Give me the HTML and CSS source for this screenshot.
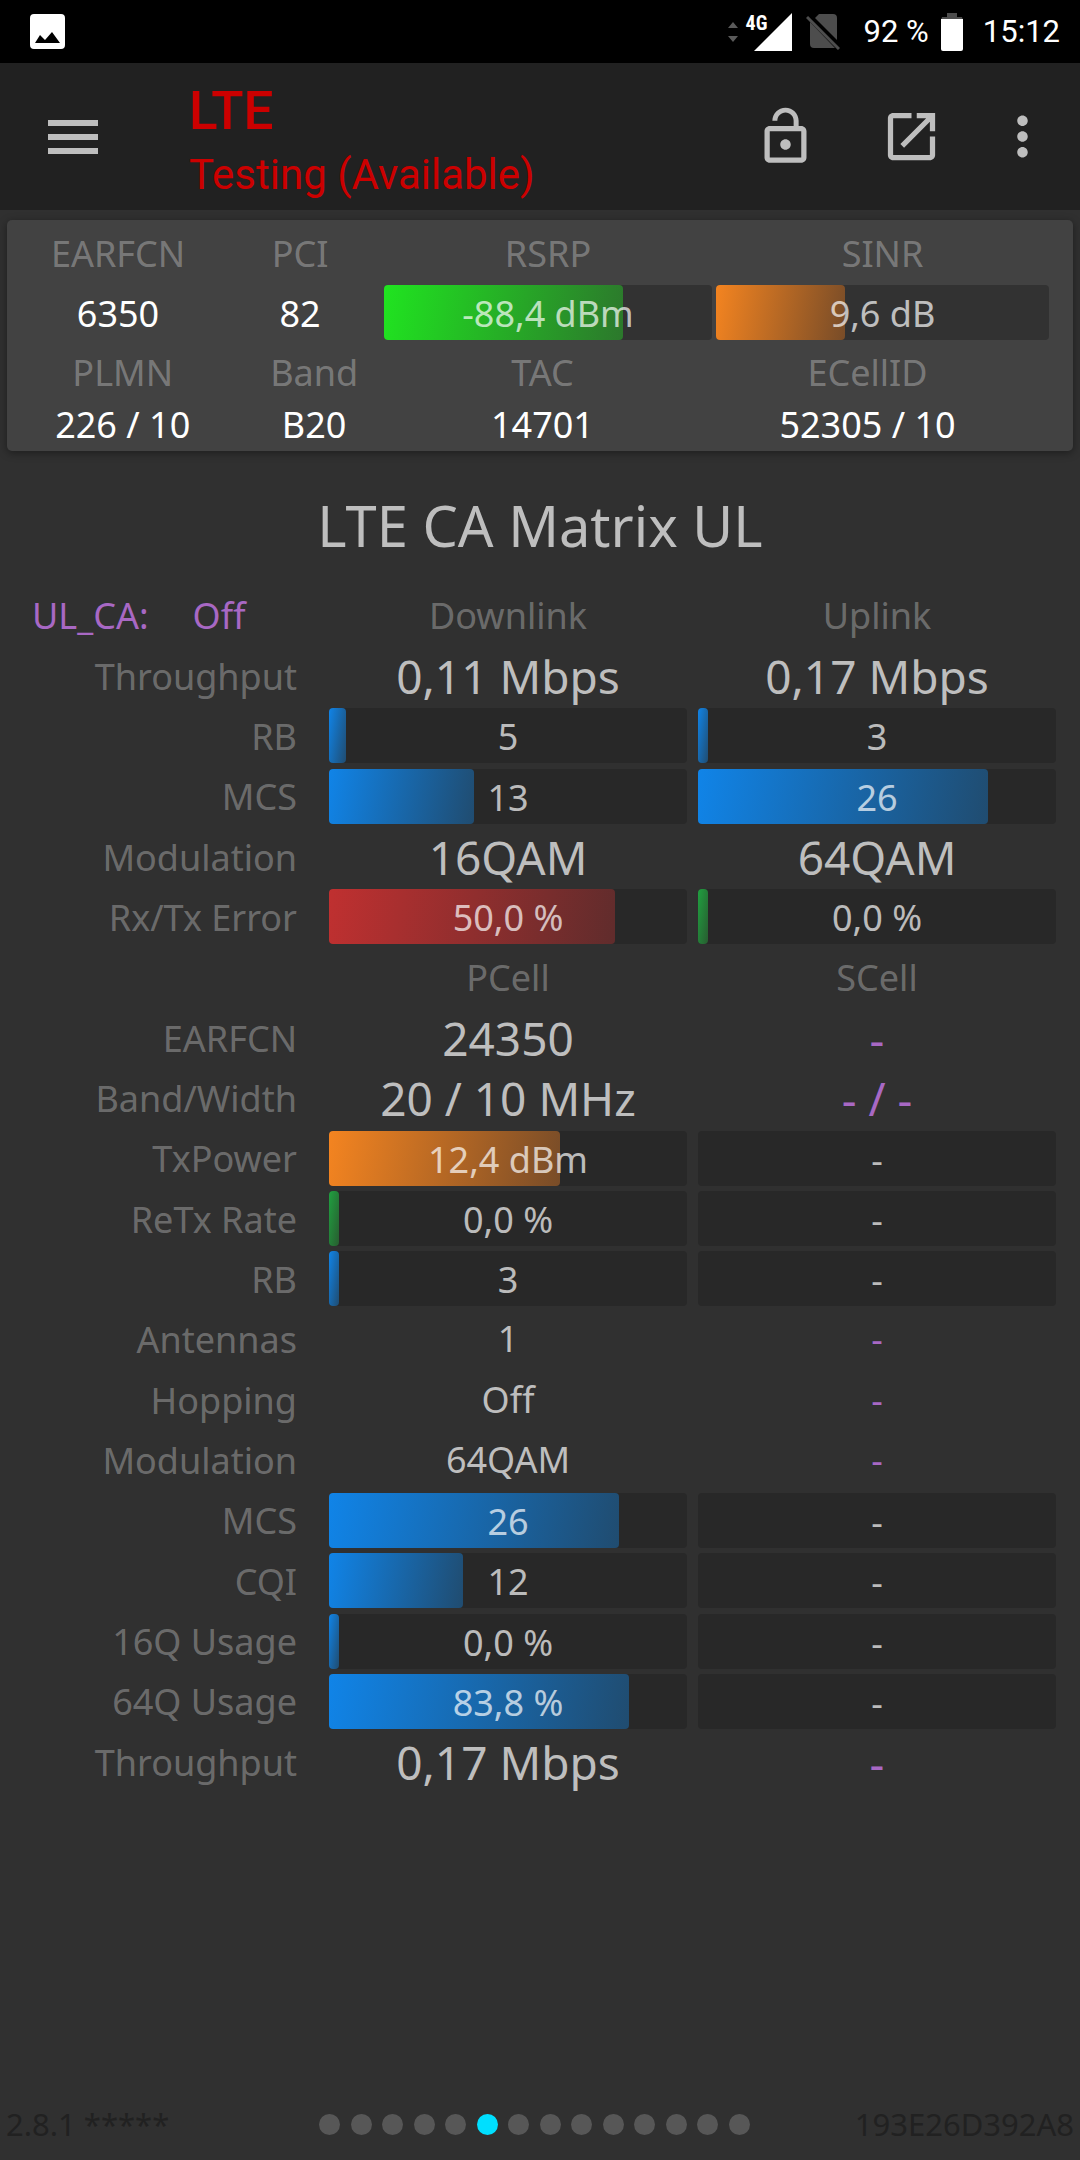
FILE: index.html
```html
<!DOCTYPE html>
<html lang="en">
<head>
<meta charset="utf-8">
<meta name="viewport" content="width=device-width">
<title>LTE CA Matrix UL</title>
<link rel="stylesheet" href="styles.css">
</head>
<body>
<div class="statusbar">
  <svg class="notice" viewBox="0 0 35 35" width="35" height="35"><path fill="#fff" fill-rule="evenodd" d="M4 0h27a4 4 0 0 1 4 4v27a4 4 0 0 1-4 4H4a4 4 0 0 1-4-4V4a4 4 0 0 1 4-4zM5 29h25L22 18l-7 8-5-5z"/></svg>
  <div class="network">
    <svg viewBox="0 0 10 20" width="10" height="20" fill="#5a5a5a"><path d="M5 0l5 6H0zM5 20l5-6H0z"/></svg>
    <div class="signal">
      <svg viewBox="0 0 38 38" width="38" height="38" fill="#fff"><path d="M38 0v38H0z"/></svg>
      <span class="signal-type">4G</span>
    </div>
    <svg class="sim" viewBox="0 0 34 37" width="34" height="37"><path fill="#4d4d4d" d="M13 1h14a4 4 0 0 1 4 4v22L9 5zM4 9l25 26H8a4 4 0 0 1-4-4z"/><path stroke="#4d4d4d" stroke-width="3" d="M1 4l32 32"/></svg>
  </div>
  <span class="charge">92 %</span>
  <svg class="battery" viewBox="0 0 22 38" width="22" height="38"><path fill="#4d4d4d" d="M6 0h10v4h5l1 3H0l1-3h5z"/><path fill="#fff" d="M0 6h22v30a2 2 0 0 1-2 2H2a2 2 0 0 1-2-2z"/></svg>
  <time>15:12</time>
</div>

<header class="toolbar">
  <button class="icon-button menu" aria-label="Menu"><svg viewBox="0 0 50 34" width="50" height="34"><path d="M0 0h50v6H0zM0 14h50v6H0zM0 28h50v6H0z"/></svg></button>
  <div class="heading">
    <div class="network-type">LTE</div>
    <div class="operator">Testing (Available)</div>
  </div>
  <button class="icon-button" aria-label="Unlock"><svg viewBox="0 0 24 24" width="63" height="63"><path d="M12 17c1.1 0 2-.9 2-2s-.9-2-2-2-2 .9-2 2 .9 2 2 2zm6-9h-1V6c0-2.76-2.24-5-5-5S7 3.24 7 6h1.9c0-1.71 1.39-3.1 3.1-3.1 1.71 0 3.1 1.39 3.1 3.1v2H6c-1.1 0-2 .9-2 2v10c0 1.1.9 2 2 2h12c1.1 0 2-.9 2-2V10c0-1.1-.9-2-2-2zm0 12H6V10h12v10z"/></svg></button>
  <button class="icon-button open" aria-label="Open"><svg viewBox="0 0 24 24" width="63" height="63"><path d="M19 19H5V5h7V3H5c-1.11 0-2 .9-2 2v14c0 1.1.89 2 2 2h14c1.1 0 2-.9 2-2v-7h-2v7zM14 3v2h3.59l-9.83 9.83 1.41 1.41L19 6.41V10h2V3h-7z"/></svg></button>
  <button class="icon-button more" aria-label="More"><svg viewBox="0 0 24 24" width="63" height="63"><path d="M12 8c1.1 0 2-.9 2-2s-.9-2-2-2-2 .9-2 2 .9 2 2 2zm0 2c-1.1 0-2 .9-2 2s.9 2 2 2 2-.9 2-2-.9-2-2-2zm0 6c-1.1 0-2 .9-2 2s.9 2 2 2 2-.9 2-2-.9-2-2-2z"/></svg></button>
</header>

<section class="card">
  <dl class="facts radio">
    <div><dt>EARFCN</dt><dd>6350</dd></div>
    <div><dt>PCI</dt><dd>82</dd></div>
    <div><dt>RSRP</dt><dd class="bar"><span class="fill lime" style="width:73%"></span><span class="value">-88,4 dBm</span></dd></div>
    <div><dt>SINR</dt><dd class="bar"><span class="fill orange" style="width:38.7%"></span><span class="value">9,6 dB</span></dd></div>
  </dl>
  <dl class="facts cell">
    <div><dt>PLMN</dt><dd>226 / 10</dd></div>
    <div><dt>Band</dt><dd>B20</dd></div>
    <div><dt>TAC</dt><dd>14701</dd></div>
    <div><dt>ECellID</dt><dd>52305 / 10</dd></div>
  </dl>
</section>

<main>
  <h1>LTE CA Matrix UL</h1>
  <table class="matrix">
    <colgroup><col class="names"><col><col></colgroup>
    <tbody>
    <tr><td class="aggregation"><span>UL_CA:</span><span>Off</span></td><th scope="col">Downlink</th><th scope="col">Uplink</th></tr>
    <tr class="large"><th scope="row">Throughput</th><td>0,11 Mbps</td><td>0,17 Mbps</td></tr>
    <tr><th scope="row">RB</th><td><div class="bar"><span class="fill blue" style="width:4.7%"></span><span class="value">5</span></div></td><td><div class="bar"><span class="fill blue" style="width:2.8%"></span><span class="value">3</span></div></td></tr>
    <tr><th scope="row">MCS</th><td><div class="bar"><span class="fill blue" style="width:40.5%"></span><span class="value">13</span></div></td><td><div class="bar"><span class="fill blue" style="width:81%"></span><span class="value">26</span></div></td></tr>
    <tr class="large"><th scope="row">Modulation</th><td>16QAM</td><td>64QAM</td></tr>
    <tr><th scope="row">Rx/Tx Error</th><td><div class="bar"><span class="fill red" style="width:80%"></span><span class="value">50,0 %</span></div></td><td><div class="bar"><span class="fill green" style="width:0%"></span><span class="value">0,0 %</span></div></td></tr>
    </tbody>
    <tbody>
    <tr><td></td><th scope="col">PCell</th><th scope="col">SCell</th></tr>
    <tr class="large"><th scope="row">EARFCN</th><td>24350</td><td class="none">-</td></tr>
    <tr class="large"><th scope="row">Band/Width</th><td>20 / 10 MHz</td><td class="none">- / -</td></tr>
    <tr><th scope="row">TxPower</th><td><div class="bar"><span class="fill orange" style="width:64.5%"></span><span class="value">12,4 dBm</span></div></td><td><div class="bar"><span class="value">-</span></div></td></tr>
    <tr><th scope="row">ReTx Rate</th><td><div class="bar"><span class="fill green" style="width:0%"></span><span class="value">0,0 %</span></div></td><td><div class="bar"><span class="value">-</span></div></td></tr>
    <tr><th scope="row">RB</th><td><div class="bar"><span class="fill blue" style="width:2.8%"></span><span class="value">3</span></div></td><td><div class="bar"><span class="value">-</span></div></td></tr>
    <tr><th scope="row">Antennas</th><td>1</td><td class="none">-</td></tr>
    <tr><th scope="row">Hopping</th><td>Off</td><td class="none">-</td></tr>
    <tr><th scope="row">Modulation</th><td>64QAM</td><td class="none">-</td></tr>
    <tr><th scope="row">MCS</th><td><div class="bar"><span class="fill blue" style="width:81%"></span><span class="value">26</span></div></td><td><div class="bar"><span class="value">-</span></div></td></tr>
    <tr><th scope="row">CQI</th><td><div class="bar"><span class="fill blue" style="width:37.5%"></span><span class="value">12</span></div></td><td><div class="bar"><span class="value">-</span></div></td></tr>
    <tr><th scope="row">16Q Usage</th><td><div class="bar"><span class="fill blue" style="width:0%"></span><span class="value">0,0 %</span></div></td><td><div class="bar"><span class="value">-</span></div></td></tr>
    <tr><th scope="row">64Q Usage</th><td><div class="bar"><span class="fill blue" style="width:83.8%"></span><span class="value">83,8 %</span></div></td><td><div class="bar"><span class="value">-</span></div></td></tr>
    <tr class="large"><th scope="row">Throughput</th><td>0,17 Mbps</td><td class="none">-</td></tr>
    </tbody>
  </table>
</main>

<footer>
  <span>2.8.1 *****</span>
  <nav class="pages" aria-label="Pages">
    <button aria-label="Page 1"></button><button aria-label="Page 2"></button><button aria-label="Page 3"></button><button aria-label="Page 4"></button><button aria-label="Page 5"></button><button aria-label="Page 6" aria-current="page"></button><button aria-label="Page 7"></button><button aria-label="Page 8"></button><button aria-label="Page 9"></button><button aria-label="Page 10"></button><button aria-label="Page 11"></button><button aria-label="Page 12"></button><button aria-label="Page 13"></button><button aria-label="Page 14"></button>
  </nav>
  <span class="device">193E26D392A8</span>
</footer>
</body>
</html>
```
FILE: styles.css
```css
:root {
  --page: #303030;
  --soft: #bebebe;
  --label: rgba(255, 255, 255, .3);
  --purple: #a868c4;
  --track: #282828;
}

* { box-sizing: border-box; }

body {
  margin: 0;
  min-height: 100vh;
  display: flex;
  flex-direction: column;
  background: var(--page);
  color: var(--soft);
  font: 36px/56px "Noto Sans", "Open Sans", sans-serif;
}

svg { display: block; }

button {
  padding: 0;
  border: 0;
  background: none;
}

/* Status bar */
.statusbar {
  display: flex;
  align-items: center;
  height: 63px;
  padding: 0 20px 0 30px;
  background: #000;
  color: #fff;
  font: 31px/64px Roboto, sans-serif;
}
.network {
  display: flex;
  align-items: center;
  margin-left: auto;
}
.signal {
  position: relative;
  margin-left: 16px;
}
.signal-type {
  position: absolute;
  left: -8px;
  top: 0;
  font: bold 20px/20px "Roboto Condensed", Roboto, sans-serif;
}
.sim { margin-left: 14px; }
.charge { margin-left: 24px; }
.battery { margin: 0 20px 0 12px; }

/* Toolbar */
.toolbar {
  display: flex;
  align-items: center;
  height: 147px;
  padding: 0 26px 0 48px;
  background: #212121;
  color: #cc0000;
  font-family: Roboto, sans-serif;
}
.icon-button { fill: #bebebe; }
.heading {
  flex: 1;
  margin-left: 91px;
  padding-top: 12px;
  line-height: 64px;
}
.network-type {
  font-size: 53px;
  font-weight: 500;
}
.operator { font-size: 42px; }
.open { margin: 0 48px 0 63px; }

/* Serving cell card */
.card {
  margin: 10px 7px 0;
  padding: 5px 22px 3px 11px;
  border-radius: 5px;
  background: #424242;
  box-shadow: 0 2px 8px rgba(0, 0, 0, .4);
  color: #fff;
  --track: #323232;
}
.facts {
  display: grid;
  margin: 0;
  text-align: center;
}
.radio { grid-template-columns: 200fr 164fr 332fr 337fr; }
.cell { grid-template-columns: 210fr 174fr 284fr 368fr; }
.facts dt {
  color: var(--label);
  line-height: 58px;
}
.facts dd { margin: 0; }
.radio dd {
  margin: 2px 2px 4px;
  height: 55px;
  line-height: 57px;
}
.cell dd { line-height: 46px; }

/* Level bars */
.bar {
  display: grid;
  height: 55px;
  border-radius: 4px;
  background: var(--track);
  line-height: 57px;
  text-align: center;
}
.fill, .value {
  grid-area: 1 / 1;
  height: 55px;
}
.fill {
  min-width: 10px;
  border-radius: 4px;
}
.value { color: rgba(255, 255, 255, .7); }
.lime { background: linear-gradient(100deg, #20e420, #2c782c); }
.orange { background: linear-gradient(100deg, #f48420, #784c28); }
.blue { background: linear-gradient(100deg, #1084e8, #204c70); }
.red { background: linear-gradient(100deg, #c03030, #602c2c); }
.green { background: linear-gradient(100deg, #20a040, #285c30); }

/* Carrier aggregation matrix */
main {
  flex: 1;
  padding: 35px 24px 40px 31px;
}
h1 {
  margin: 0 7px 21px 0;
  font-size: 56px;
  font-weight: 400;
  line-height: 78px;
  text-align: center;
}
.matrix {
  width: 100%;
  height: 1207px;
  table-layout: fixed;
  border-collapse: collapse;
}
.names { width: 287px; }
.matrix th, .matrix td {
  padding: 0 0 0 11px;
  text-align: center;
}
.matrix th {
  padding-top: 2px;
  color: var(--label);
  font-weight: 400;
}
.matrix th[scope="row"] {
  padding: 2px 21px 0 0;
  text-align: right;
}
.matrix .aggregation {
  padding: 2px 0 0 1px;
  color: var(--purple);
  text-align: left;
}
.aggregation span + span { margin-left: 44px; }
.large td { font-size: 46px; }
.matrix .none { color: var(--purple); }

/* Footer */
footer {
  display: grid;
  grid-template-columns: 313fr 431fr 324fr;
  align-items: center;
  padding: 0 6px 15px;
  color: #212121;
  font-size: 31px;
  line-height: 42px;
}
.pages {
  display: flex;
  justify-content: space-between;
}
.pages button {
  width: 21px;
  height: 21px;
  border-radius: 50%;
  background: #575757;
}
.pages button[aria-current] { background: #00dfff; }
.device { text-align: right; }
```
